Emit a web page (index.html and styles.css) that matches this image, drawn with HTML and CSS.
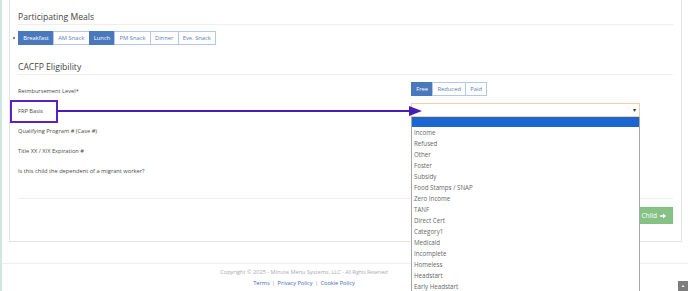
FILE: index.html
```html
<!DOCTYPE html>
<html lang="en">
<head>
    <meta charset="UTF-8">
    <meta name="viewport" content="width=device-width, initial-scale=1.0">
    <title>Child Enrollment - Minute Menu</title>
    <link rel="stylesheet" href="styles.css">
</head>
<body>
    <div class="page">
        <div class="panel">
            <h3 class="section-title">Participating Meals</h3>
            <div class="meal-row">
                <span class="req-dot"></span>
                <div class="btn-group">
                    <button class="seg active">Breakfast</button>
                    <button class="seg">AM Snack</button>
                    <button class="seg active">Lunch</button>
                    <button class="seg">PM Snack</button>
                    <button class="seg">Dinner</button>
                    <button class="seg">Eve. Snack</button>
                </div>
            </div>

            <h3 class="section-title second">CACFP Eligibility</h3>
            <div class="form-rows">
                <div class="form-row">
                    <label class="form-label">Reimbursement Level*</label>
                    <div class="btn-group">
                        <button class="seg active">Free</button>
                        <button class="seg">Reduced</button>
                        <button class="seg">Paid</button>
                    </div>
                </div>
                <div class="form-row">
                    <label class="form-label frp">FRP Basis</label>
                    <div class="select-wrap">
                        <div class="select-box"><span class="caret">&#9662;</span></div>
                        <ul class="select-list">
                            <li class="hl">&nbsp;</li>
                            <li>Income</li>
                            <li>Refused</li>
                            <li>Other</li>
                            <li>Foster</li>
                            <li>Subsidy</li>
                            <li>Food Stamps / SNAP</li>
                            <li>Zero Income</li>
                            <li>TANF</li>
                            <li>Direct Cert</li>
                            <li>Category1</li>
                            <li>Medicaid</li>
                            <li>Incomplete</li>
                            <li>Homeless</li>
                            <li>Headstart</li>
                            <li>Early Headstart</li>
                        </ul>
                    </div>
                </div>
                <div class="form-row">
                    <label class="form-label">Qualifying Program # (Case #)</label>
                </div>
                <div class="form-row">
                    <label class="form-label">Title XX / XIX Expiration #</label>
                </div>
                <div class="form-row">
                    <label class="form-label">Is this child the dependent of a migrant worker?</label>
                </div>
            </div>
            <div class="actions">
                <button class="btn-save">Enroll Child
                    <svg class="arrow-ico" width="6" height="6" viewBox="0 0 6 6"><path d="M0 2.2h3V0.4L6 3 3 5.6V3.8H0z" fill="#fff"/></svg>
                </button>
            </div>
        </div>

        <footer class="footer">
            <div class="footer-inner">
                <p class="copy">Copyright &copy; 2025 - Minute Menu Systems, LLC - <small>All Rights Reserved</small></p>
                <p class="links"><a href="#">Terms</a> <span class="sep">|</span> <a href="#">Privacy Policy</a> <span class="sep">|</span> <a href="#">Cookie Policy</a></p>
            </div>
        </footer>
    </div>

    <!-- annotation: highlight + pointer -->
    <div class="note-box"></div>
    <svg class="note-arrow" width="372" height="12" viewBox="0 0 372 12">
        <line x1="0" y1="6" x2="356" y2="6" stroke="#4a1db5" stroke-width="2"/>
        <polygon points="352,1 365,6 352,11" fill="#4a1db5"/>
    </svg>

    <a class="to-top" href="#">&#9650;</a>
</body>
</html>
```

FILE: styles.css
```css
* { margin: 0; padding: 0; box-sizing: border-box; }
body {
    font-family: "Open Sans", "Liberation Sans", sans-serif;
    background: #fff;
    color: #555;
    width: 688px;
    height: 291px;
    overflow: hidden;
}
.page {
    border-left: 2px solid #cfe7dd;
    min-height: 291px;
}
.panel {
    margin: 0 6px 0 7px;
    border: 1px solid #e2e2e2;
    border-top: 0;
    padding: 10px 8px 17px 8px;
}
.section-title {
    font-size: 8.6px;
    font-weight: 400;
    line-height: 14px;
    color: #444;
    border-bottom: 1px solid #eee;
}
.section-title.second { margin-top: 15px; }

.meal-row {
    display: flex;
    align-items: center;
    margin-top: 6px;
}
.req-dot {
    width: 2px;
    height: 2px;
    background: #b07060;
    margin-left: -5px;
    margin-right: 3px;
}
.btn-group { display: flex; }
.seg {
    font-family: inherit;
    font-size: 5.8px;
    line-height: 12px;
    height: 14px;
    padding: 0 4.2px;
    border: 1px solid #b3c7e6;
    margin-left: -1px;
    background: #fff;
    color: #5a80ba;
}
.seg:first-child { margin-left: 0; }
.seg.active {
    background: #4a78bd;
    border-color: #4a78bd;
    color: #fff;
}

.form-rows { margin-top: 7px; }
.form-row {
    display: grid;
    grid-template-columns: 393px 229px;
    height: 20px;
}
.form-label {
    font-size: 5.7px;
    line-height: 10px;
    padding-top: 4px;
    color: #4a4a4a;
}
.select-wrap {
    position: relative;
    padding-top: 1px;
}
.select-box {
    height: 14px;
    border: 1px solid #f6cfa6;
    background: #fff;
    position: relative;
}
.caret {
    position: absolute;
    right: 3px;
    top: 1px;
    font-size: 6px;
    line-height: 10px;
    color: #333;
}
.select-list {
    position: absolute;
    top: 15px;
    left: 0;
    width: 229px;
    list-style: none;
    background: #fff;
    border: 1px solid #a8a8a8;
    border-top: 0;
    z-index: 5;
}
.select-list li {
    font-size: 6.2px;
    line-height: 11px;
    height: 11px;
    padding-left: 2px;
    color: #666;
}
.select-list li.hl {
    background: #1b66cf;
    height: 10px;
}

.actions {
    margin-top: 16px;
    border-top: 1px solid #eee;
    padding-top: 8px;
    display: flex;
    justify-content: flex-end;
}
.btn-save {
    font-family: inherit;
    font-size: 6.6px;
    height: 17px;
    padding: 0 6px 0 8px;
    border: 1px solid #84c084;
    background: #86c286;
    color: #fff;
    display: flex;
    align-items: center;
}
.arrow-ico { margin-left: 3px; }

.footer {
    margin-top: 21px;
    border-top: 1px solid #eee;
    padding-top: 3px;
}
.footer-inner {
    width: 604px;
    text-align: center;
}
.copy {
    font-size: 5.6px;
    line-height: 10px;
    color: #aaa;
}
.copy small { font-size: 4.8px; }
.links {
    font-size: 5.6px;
    line-height: 12px;
    color: #888;
}
.links a { color: #3c6db3; text-decoration: none; }
.links .sep { margin: 0 1px; color: #999; }

.note-box {
    position: absolute;
    left: 10px;
    top: 100px;
    width: 48px;
    height: 23px;
    border: 2px solid #5a22c2;
}
.note-arrow {
    position: absolute;
    left: 57px;
    top: 105px;
}
.to-top {
    position: absolute;
    right: 0;
    bottom: 0;
    width: 10px;
    height: 10px;
    background: #7d7d7d;
    color: #fff;
    font-size: 4px;
    line-height: 10px;
    text-align: center;
    text-decoration: none;
}
```
